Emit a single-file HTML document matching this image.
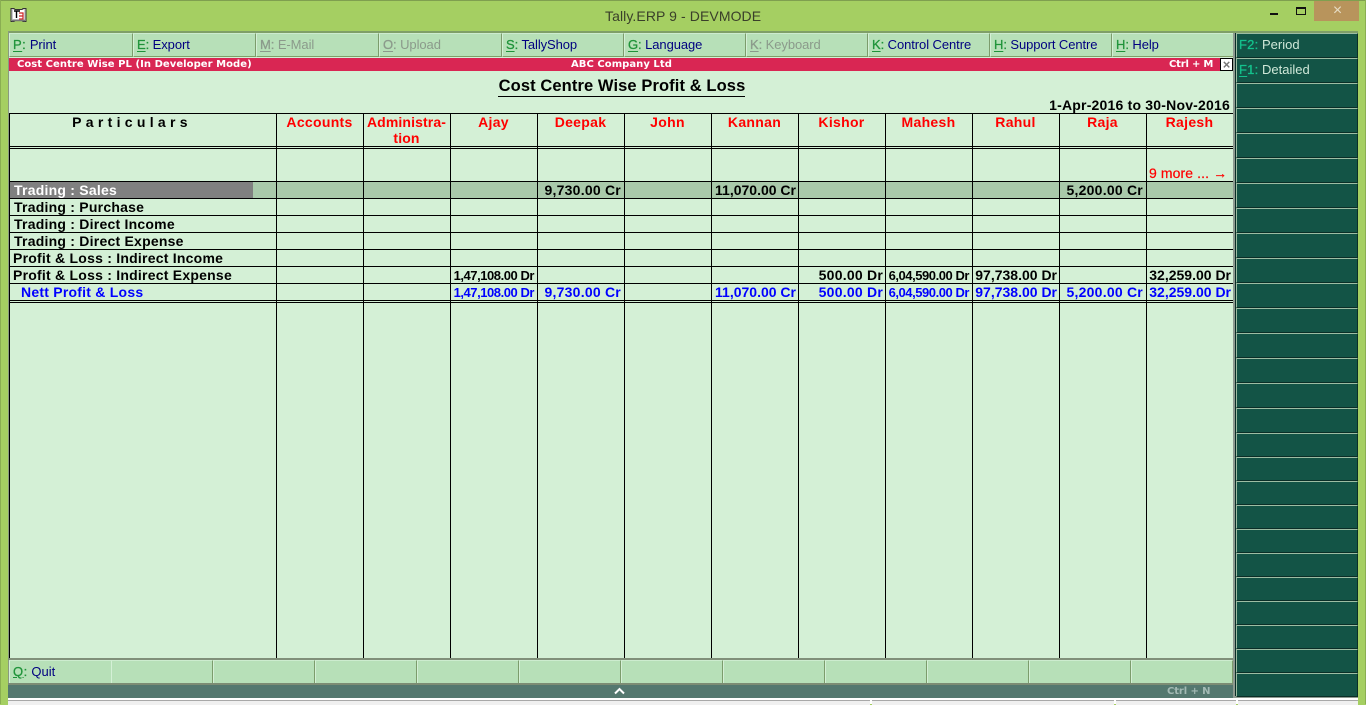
<!DOCTYPE html>
<html><head><meta charset="utf-8"><title>Tally.ERP 9</title>
<style>
html,body{margin:0;padding:0;width:1366px;height:704px;overflow:hidden;background:#a5cf62;font-family:"Liberation Sans",Arial,sans-serif}
div,span.a{position:absolute;white-space:nowrap}
.vl{top:113px;width:1px;height:545px;background:#000}
.hl{left:9px;width:1224px;height:1px;background:#000}
.tb{top:33px;height:22px;background:#b7e0b8;border-top:1px solid #cdeccf;border-left:1px solid #d4f0d6;border-right:1px solid #7c9c6c;border-bottom:1px solid #7f9f68;font-size:13px;line-height:21px;color:#000080;padding-left:3px;letter-spacing:-.08px;box-sizing:content-box}
.tb b,.rb b,.bb b{font-weight:normal;color:#1f9339;-webkit-text-stroke:.3px}
.tb b u,.rb b u{text-underline-offset:2px}
.off{color:#8b9a8b}.off b{color:#8b9a8b}
.bb{top:660px;height:22px;background:#b7e0b8;border-top:1px solid #cdeccf;border-left:1px solid #d4f0d6;border-right:1px solid #7c9c6c;font-size:13px;line-height:21px;color:#000080;padding-left:3px}
.rb{left:1236px;width:118px;background:#135446;border-top:1px solid #9dbda3;border-left:1px solid #9dbda3;border-bottom:1px solid #0a2e27;border-right:1px solid #0a2e27;font-size:13px;line-height:21px;color:#cfe8d8;padding-left:2px}
.rb b{color:#14c28c;letter-spacing:.2px}
.h{top:114px;width:87px;text-align:center;color:#f00;font-weight:bold;font-size:14px;line-height:16px;letter-spacing:.3px}
.l{left:13px;font-weight:bold;font-size:14px;line-height:16px;letter-spacing:.23px;color:#000}
.n{width:84px;text-align:right;font-weight:bold;font-size:14px;line-height:16px;letter-spacing:.23px;color:#000}
.t{letter-spacing:0}
.w{font-size:13px;letter-spacing:-.45px;line-height:17px}
.bl{color:#00f}
.rt{top:58px;height:13px;font-family:"DejaVu Sans",sans-serif;font-weight:bold;font-size:10px;line-height:13px;color:#fff;letter-spacing:.05px}
</style></head><body>
<div style="left:0;top:0;width:1366px;height:1px;background:#7f9f4f"></div>
<div style="left:0;top:0;width:1px;height:704px;background:#8aae52"></div>
<div style="left:1365px;top:0;width:1px;height:704px;background:#8aae52"></div>

<svg style="position:absolute;left:10px;top:7px" width="17" height="17" viewBox="0 0 17 17"><path d="M1 1.5h3l1 1h7l1-1h3v13h-3l-1-1H5l-1 1H1z" fill="#ccc" stroke="#333"/><rect x="3" y="3" width="11" height="9" fill="#fff"/><path d="M4 4h6M6.5 4v7" stroke="#000" stroke-width="1.4" fill="none"/><path d="M9 6h4v6H9M9 9h4" stroke="#c22" stroke-width="1.2" fill="none"/><path d="M2 13.5h13" stroke="#777" stroke-width="1.5"/></svg>
<div style="left:605px;top:7px;font-size:14px;line-height:18px;color:#3a3f2a;letter-spacing:.09px">Tally.ERP 9 - DEVMODE</div>
<div style="left:1270px;top:13px;width:8px;height:2px;background:#111"></div>
<div style="left:1296px;top:7px;width:8px;height:5px;border:1px solid #111;border-top-width:2px"></div>
<div style="left:1314px;top:1px;width:45px;height:20px;background:#b8945c"></div>
<div style="left:1315px;top:1px;width:45px;height:20px;text-align:center;font-size:16px;line-height:20px;color:#e6dcc4">×</div>

<div style="left:8px;top:31px;width:1226px;height:668px;background:#d4f0d6"></div>
<div style="left:8px;top:31px;width:1228px;height:2px;background:#7f9f68"></div>
<div style="left:8px;top:31px;width:1px;height:668px;background:#8a9a80"></div>

<div class="tb" style="left:9px;width:119px"><b style="letter-spacing:.5px"><u>P</u>:</b> Print</div>
<div class="tb" style="left:133px;width:118px"><b><u>E</u>:</b> Export</div>
<div class="tb off" style="left:256px;width:118px"><b><u>M</u>:</b> E-Mail</div>
<div class="tb off" style="left:379px;width:118px"><b><u>O</u>:</b> Upload</div>
<div class="tb" style="left:502px;width:117px"><b><u>S</u>:</b> TallyShop</div>
<div class="tb" style="left:624px;width:117px"><b><u>G</u>:</b> Language</div>
<div class="tb off" style="left:746px;width:117px"><b><u>K</u>:</b> Keyboard</div>
<div class="tb" style="left:868px;width:117px"><b><u>K</u>:</b> Control Centre</div>
<div class="tb" style="left:990px;width:117px"><b><u>H</u>:</b> Support Centre</div>
<div class="tb" style="left:1112px;width:117px"><b><u>H</u>:</b> Help</div>

<div style="left:9px;top:58px;width:1224px;height:13px;background:#d92653"></div>
<div class="rt" style="left:17px">Cost Centre Wise PL (In Developer Mode)</div>
<div class="rt" style="left:571px">ABC Company Ltd</div>
<div class="rt" style="left:1169px;letter-spacing:-.2px">Ctrl + M</div>
<div style="left:1220px;top:58px;width:11px;height:11px;background:#fff;border:1px solid #000;text-align:center;font-size:13px;line-height:11px;font-weight:bold;color:#777">×</div>

<div style="left:471px;top:77px;width:302px;text-align:center;font-size:16.5px;font-weight:bold;line-height:19px;letter-spacing:.1px;color:#000">Cost Centre Wise Profit &amp; Loss</div>
<div style="left:498px;top:96px;width:247px;height:1px;background:#000"></div>
<div style="left:930px;top:97px;width:300px;text-align:right;font-size:14px;font-weight:bold;line-height:16px;letter-spacing:.2px;color:#000">1-Apr-2016 to 30-Nov-2016</div>

<div style="left:10px;top:182px;width:1223px;height:16px;background:#a9c9aa"></div>
<div style="left:10px;top:182px;width:243px;height:16px;background:#808080"></div>

<div class="hl" style="top:113px"></div>
<div class="hl" style="top:146px"></div>
<div class="hl" style="top:148px"></div>
<div class="hl" style="top:181px"></div>
<div class="hl" style="top:198px"></div>
<div class="hl" style="top:215px"></div>
<div class="hl" style="top:232px"></div>
<div class="hl" style="top:249px"></div>
<div class="hl" style="top:266px"></div>
<div class="hl" style="top:283px"></div>
<div class="hl" style="top:300px"></div>
<div class="hl" style="top:302px"></div>
<div class="vl" style="left:9px"></div>
<div class="vl" style="left:276px"></div>
<div class="vl" style="left:363px"></div>
<div class="vl" style="left:450px"></div>
<div class="vl" style="left:537px"></div>
<div class="vl" style="left:624px"></div>
<div class="vl" style="left:711px"></div>
<div class="vl" style="left:798px"></div>
<div class="vl" style="left:885px"></div>
<div class="vl" style="left:972px"></div>
<div class="vl" style="left:1059px"></div>
<div class="vl" style="left:1146px"></div>

<div style="left:12px;top:114px;width:240px;text-align:center;font-size:14px;font-weight:bold;line-height:16px;letter-spacing:4.3px;color:#000">Particulars</div>
<div class="h" style="left:276px">Accounts</div>
<div class="h" style="left:363px;letter-spacing:.12px">Administra-<br>tion</div>
<div class="h" style="left:450px">Ajay</div>
<div class="h" style="left:537px">Deepak</div>
<div class="h" style="left:624px">John</div>
<div class="h" style="left:711px">Kannan</div>
<div class="h" style="left:798px">Kishor</div>
<div class="h" style="left:885px">Mahesh</div>
<div class="h" style="left:972px">Rahul</div>
<div class="h" style="left:1059px">Raja</div>
<div class="h" style="left:1146px">Rajesh</div>
<div style="left:1149px;top:165px;font-size:14px;line-height:17px;letter-spacing:.1px;color:#f00;-webkit-text-stroke:.2px">9 more ... →</div>

<div class="l" style="top:182px;left:14px;color:#fff">Trading : Sales</div>
<div class="l" style="top:199px;left:14px">Trading : Purchase</div>
<div class="l" style="top:216px;left:14px">Trading : Direct Income</div>
<div class="l" style="top:233px;left:14px">Trading : Direct Expense</div>
<div class="l" style="top:250px">Profit &amp; Loss : Indirect Income</div>
<div class="l" style="top:267px">Profit &amp; Loss : Indirect Expense</div>
<div class="l bl" style="top:284px;left:21px">Nett Profit &amp; Loss</div>

<div class="n" style="left:537px;top:182px">9,730.00 Cr</div>
<div class="n t" style="left:712px;top:182px">11,070.00 Cr</div>
<div class="n" style="left:1059px;top:182px">5,200.00 Cr</div>

<div class="n w" style="left:450px;top:267px">1,47,108.00 Dr</div>
<div class="n" style="left:799px;top:267px">500.00 Dr</div>
<div class="n w" style="left:885px;top:267px">6,04,590.00 Dr</div>
<div class="n t" style="left:973px;top:267px">97,738.00 Dr</div>
<div class="n t" style="left:1147px;top:267px">32,259.00 Dr</div>

<div class="n w bl" style="left:450px;top:284px">1,47,108.00 Dr</div>
<div class="n bl" style="left:537px;top:284px">9,730.00 Cr</div>
<div class="n t bl" style="left:712px;top:284px">11,070.00 Cr</div>
<div class="n bl" style="left:799px;top:284px">500.00 Dr</div>
<div class="n w bl" style="left:885px;top:284px">6,04,590.00 Dr</div>
<div class="n t bl" style="left:973px;top:284px">97,738.00 Dr</div>
<div class="n bl" style="left:1059px;top:284px">5,200.00 Cr</div>
<div class="n t bl" style="left:1147px;top:284px">32,259.00 Dr</div>

<div style="left:8px;top:658px;width:1226px;height:2px;background:#80907a"></div>
<div class="bb" style="left:9px;width:98px"><b style="letter-spacing:.5px"><u>Q</u>:</b> Quit</div>
<div class="bb" style="left:111px;width:97px"></div>
<div class="bb" style="left:213px;width:97px"></div>
<div class="bb" style="left:315px;width:97px"></div>
<div class="bb" style="left:417px;width:97px"></div>
<div class="bb" style="left:519px;width:97px"></div>
<div class="bb" style="left:621px;width:97px"></div>
<div class="bb" style="left:723px;width:97px"></div>
<div class="bb" style="left:825px;width:97px"></div>
<div class="bb" style="left:927px;width:97px"></div>
<div class="bb" style="left:1029px;width:97px"></div>
<div class="bb" style="left:1131px;width:97px"></div>
<div style="left:8px;top:683px;width:1226px;height:2px;background:#7c8c74"></div>
<div style="left:8px;top:685px;width:1226px;height:13px;background:#54786f"></div>
<svg style="position:absolute;left:614px;top:687px" width="11" height="8" viewBox="0 0 11 8"><path d="M1 6.5L5.5 2L10 6.5" stroke="#fff" stroke-width="2" fill="none"/></svg>
<div style="left:1167px;top:685px;font-family:'DejaVu Sans',sans-serif;font-weight:bold;font-size:10px;line-height:13px;letter-spacing:-.1px;color:#a3bab4">Ctrl + N</div>

<div style="left:1233px;top:31px;width:125px;height:667px;background:#0a2e27"></div>
<div style="left:1233px;top:31px;width:2px;height:667px;background:#8d9a90"></div>
<div style="left:1356px;top:31px;width:2px;height:667px;background:#8d9a90"></div>
<div style="left:1233px;top:31px;width:125px;height:2px;background:#7f9f68"></div>
<div style="left:1233px;top:696px;width:125px;height:2px;background:#8d9a90"></div>

<div class="rb" style="top:33px;height:23px"><b>F2:</b> Period</div>
<div class="rb" style="top:58px;height:23px"><b><u>F</u>1:</b> Detailed</div>
<div class="rb" style="top:83px;height:23px"></div>
<div class="rb" style="top:108px;height:23px"></div>
<div class="rb" style="top:133px;height:23px"></div>
<div class="rb" style="top:158px;height:23px"></div>
<div class="rb" style="top:183px;height:23px"></div>
<div class="rb" style="top:208px;height:23px"></div>
<div class="rb" style="top:233px;height:23px"></div>
<div class="rb" style="top:258px;height:23px"></div>
<div class="rb" style="top:283px;height:23px"></div>
<div class="rb" style="top:308px;height:23px"></div>
<div class="rb" style="top:333px;height:23px"></div>
<div class="rb" style="top:358px;height:23px"></div>
<div class="rb" style="top:383px;height:23px"></div>
<div class="rb" style="top:408px;height:23px"></div>
<div class="rb" style="top:433px;height:22px"></div>
<div class="rb" style="top:457px;height:22px"></div>
<div class="rb" style="top:481px;height:22px"></div>
<div class="rb" style="top:505px;height:22px"></div>
<div class="rb" style="top:529px;height:22px"></div>
<div class="rb" style="top:553px;height:22px"></div>
<div class="rb" style="top:577px;height:22px"></div>
<div class="rb" style="top:601px;height:22px"></div>
<div class="rb" style="top:625px;height:22px"></div>
<div class="rb" style="top:649px;height:22px"></div>
<div class="rb" style="top:673px;height:22px"></div>

<div style="left:8px;top:698px;width:1350px;height:6px;background:#fff"></div>
<div style="left:8px;top:700px;width:862px;height:4px;background:#f0f0f0;border-top:1px solid #a8a8a8"></div>
<div style="left:872px;top:700px;width:242px;height:4px;background:#f0f0f0;border-top:1px solid #a8a8a8"></div>
<div style="left:1116px;top:700px;width:120px;height:4px;background:#f0f0f0;border-top:1px solid #a8a8a8"></div>
<div style="left:1238px;top:700px;width:120px;height:4px;background:#f0f0f0;border-top:1px solid #a8a8a8"></div>
</body></html>
